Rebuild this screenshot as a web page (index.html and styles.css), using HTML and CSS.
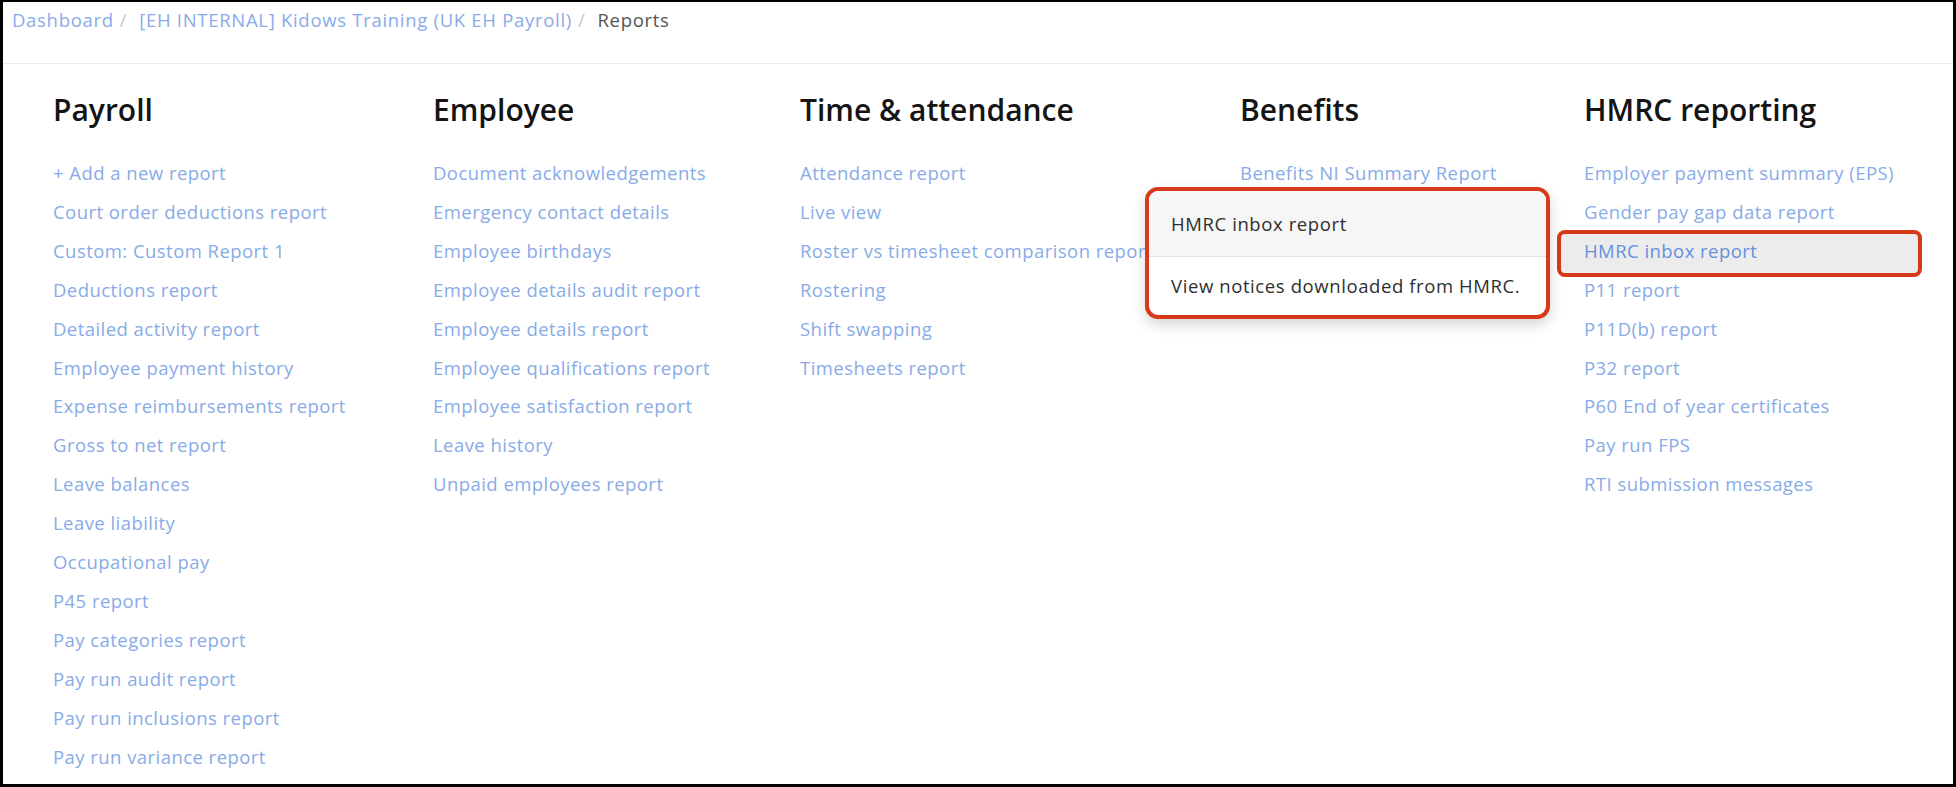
FILE: index.html
```html
<!DOCTYPE html>
<html lang="en">
<head>
<meta charset="utf-8">
<title>Reports</title>
<link rel="stylesheet" href="styles.css">
</head>
<body>
<div class="frame">
  <nav class="breadcrumb">
    <a class="crumb" href="#">Dashboard</a><span class="sep">/</span>
    <a class="crumb" href="#">[EH INTERNAL] Kidows Training (UK EH Payroll)</a><span class="sep">/</span>
    <span class="current">Reports</span>
  </nav>
  <main class="reports">
    <section class="col col-payroll">
      <h2>Payroll</h2>
      <ul>
        <li><a href="#">+ Add a new report</a></li>
        <li><a href="#">Court order deductions report</a></li>
        <li><a href="#">Custom: Custom Report 1</a></li>
        <li><a href="#">Deductions report</a></li>
        <li><a href="#">Detailed activity report</a></li>
        <li><a href="#">Employee payment history</a></li>
        <li><a href="#">Expense reimbursements report</a></li>
        <li><a href="#">Gross to net report</a></li>
        <li><a href="#">Leave balances</a></li>
        <li><a href="#">Leave liability</a></li>
        <li><a href="#">Occupational pay</a></li>
        <li><a href="#">P45 report</a></li>
        <li><a href="#">Pay categories report</a></li>
        <li><a href="#">Pay run audit report</a></li>
        <li><a href="#">Pay run inclusions report</a></li>
        <li><a href="#">Pay run variance report</a></li>
      </ul>
    </section>
    <section class="col">
      <h2>Employee</h2>
      <ul>
        <li><a href="#">Document acknowledgements</a></li>
        <li><a href="#">Emergency contact details</a></li>
        <li><a href="#">Employee birthdays</a></li>
        <li><a href="#">Employee details audit report</a></li>
        <li><a href="#">Employee details report</a></li>
        <li><a href="#">Employee qualifications report</a></li>
        <li><a href="#">Employee satisfaction report</a></li>
        <li><a href="#">Leave history</a></li>
        <li><a href="#">Unpaid employees report</a></li>
      </ul>
    </section>
    <section class="col">
      <h2>Time &amp; attendance</h2>
      <ul>
        <li><a href="#">Attendance report</a></li>
        <li><a href="#">Live view</a></li>
        <li><a href="#">Roster vs timesheet comparison report</a></li>
        <li><a href="#">Rostering</a></li>
        <li><a href="#">Shift swapping</a></li>
        <li><a href="#">Timesheets report</a></li>
      </ul>
    </section>
    <section class="col">
      <h2>Benefits</h2>
      <ul>
        <li><a href="#">Benefits NI Summary Report</a></li>
      </ul>
    </section>
    <section class="col">
      <h2>HMRC reporting</h2>
      <ul>
        <li><a href="#">Employer payment summary (EPS)</a></li>
        <li><a href="#">Gender pay gap data report</a></li>
        <li class="hovered"><a href="#">HMRC inbox report</a></li>
        <li><a href="#">P11 report</a></li>
        <li><a href="#">P11D(b) report</a></li>
        <li><a href="#">P32 report</a></li>
        <li><a href="#">P60 End of year certificates</a></li>
        <li><a href="#">Pay run FPS</a></li>
        <li><a href="#">RTI submission messages</a></li>
      </ul>
    </section>
  </main>
  <div class="popover">
    <div class="popover-title">HMRC inbox report</div>
    <div class="popover-body">View notices downloaded from HMRC.</div>
    <span class="popover-arrow"></span>
  </div>
</div>
</body>
</html>
```

FILE: styles.css
```css
html, body {
  margin: 0;
  padding: 0;
  background: #000;
}

body {
  font-family: "Open Sans", "Liberation Sans", sans-serif;
  font-size: 18.5px;
  letter-spacing: 0.45px;
  color: #333;
}

.frame {
  position: relative;
  box-sizing: border-box;
  width: 1956px;
  height: 787px;
  overflow: hidden;
  background: #fff;
  border-style: solid;
  border-color: #000;
  border-width: 2px 3px 3px 3px;
}

a {
  text-decoration: none;
  color: #88abe8;
}

.breadcrumb {
  display: flex;
  align-items: center;
  height: 62px;
  box-sizing: border-box;
  padding: 6px 0 32px 9px;
  border-bottom: 1px solid #ececec;
  line-height: 24px;
  letter-spacing: 0.7px;
  white-space: nowrap;
}

.breadcrumb .sep {
  color: #c8c8c8;
  margin: 0 12px 0 6px;
}

.breadcrumb .current {
  color: #555;
}

.reports {
  display: grid;
  grid-template-columns: 380px 367px 440px 344px 1fr;
  padding: 28px 0 0 50px;
}

.col h2 {
  margin: 0 0 26px;
  font-size: 30px;
  font-weight: 600;
  line-height: 36px;
  color: #141414;
  letter-spacing: 0;
  white-space: nowrap;
}

.col ul {
  list-style: none;
  margin: 0;
  padding: 0;
}

.col li {
  line-height: 38.9px;
  white-space: nowrap;
}

.col li.hovered {
  margin: 2px 35px -2px -23px;
  padding-left: 23px;
  background: #ececec;
  border-radius: 4px;
  outline: 4px solid #d8391b;
  outline-offset: 0;
}

.col li.hovered a {
  color: #6690db;
  position: relative;
  top: -2px;
}

.popover {
  position: absolute;
  left: 1142px;
  top: 185px;
  width: 405px;
  box-sizing: border-box;
  border: 4px solid #d8391b;
  border-radius: 13px;
  background: #fff;
  box-shadow: 0 6px 14px rgba(0, 0, 0, 0.16);
  color: #2f2f2f;
  line-height: 24px;
  letter-spacing: 0.6px;
}

.popover-title {
  display: flex;
  align-items: center;
  height: 66px;
  box-sizing: border-box;
  padding-left: 22px;
  background: #f6f6f6;
  border-bottom: 1px solid #e3e3e3;
  border-radius: 9px 9px 0 0;
}

.popover-body {
  display: flex;
  align-items: center;
  height: 58px;
  box-sizing: border-box;
  padding-left: 22px;
}

.popover-arrow {
  position: absolute;
  right: -15px;
  top: 53px;
  width: 0;
  height: 0;
  border-top: 14px solid transparent;
  border-bottom: 14px solid transparent;
  border-left: 11px solid #dcdcdc;
  z-index: -1;
}

.popover-arrow::after {
  content: "";
  position: absolute;
  left: -12px;
  top: -13px;
  border-top: 13px solid transparent;
  border-bottom: 13px solid transparent;
  border-left: 10px solid #fff;
}
```
